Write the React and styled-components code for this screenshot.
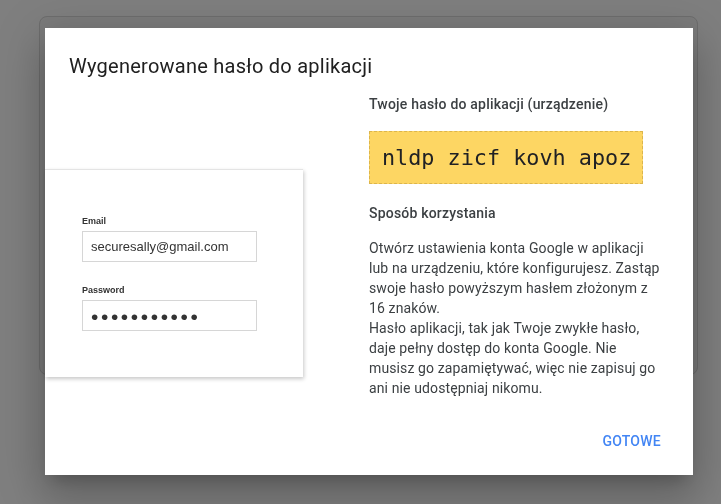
import React from "react";
import styled, { createGlobalStyle } from "styled-components";

const GlobalStyle = createGlobalStyle`
	html, body {
		margin: 0;
		padding: 0;
		background: #7f7f7f;
		font-family: Roboto, "Liberation Sans", Arial, sans-serif;
		overflow: hidden;
	}
`;

const Page = styled.div`
	width: 721px;
	height: 504px;
	padding: 16px 0 0 39px;
	box-sizing: border-box;
`;

// the dimmed page content sitting under the modal
const UnderPanel = styled.div`
	width: 659px;
	height: 359px;
	box-sizing: border-box;
	border: 1px solid #6d6d6d;
	border-radius: 8px;
	background: #7b7b7b;
`;

const Dialog = styled.div`
	position: fixed;
	left: 45px;
	top: 28px;
	width: 648px;
	height: 447px;
	background: #fff;
	display: flex;
	flex-direction: column;
	box-shadow: 0 11px 15px -7px rgba(0, 0, 0, 0.2),
		0 24px 38px 3px rgba(0, 0, 0, 0.14), 0 9px 46px 8px rgba(0, 0, 0, 0.12);
`;

const Title = styled.h2`
	margin: 0;
	padding: 24px 24px 0;
	font-size: 20px;
	line-height: 28px;
	font-weight: 400;
	letter-spacing: 0.25px;
	color: #202020;
`;

const Body = styled.div`
	display: flex;
	margin-top: 14px;
`;

const IllustrationCol = styled.div`
	width: 324px;
	flex-shrink: 0;
	padding-top: 75px;
`;

const LoginCard = styled.div`
	width: 258px;
	height: 208px;
	box-sizing: border-box;
	background: #fff;
	border-top: 1px solid #e4e4e4;
	box-shadow: 1px 2px 4px rgba(0, 0, 0, 0.22);
	padding: 45px 0 0 37px;
	font-family: "Liberation Sans", Arial, sans-serif;
`;

const FieldLabel = styled.div`
	font-size: 9px;
	line-height: 12px;
	font-weight: 700;
	color: #333;
	margin-bottom: 4px;
	margin-top: ${(p) => (p.$first ? "0" : "22px")};
`;

const FakeInput = styled.div`
	width: 175px;
	height: 31px;
	box-sizing: border-box;
	border: 1px solid #d6d6d6;
	display: flex;
	align-items: center;
	padding-left: 8px;
	font-size: 13px;
	color: #333;
`;

const Dots = styled.span`
	font-size: 21px;
	letter-spacing: 2.6px;
	color: #333;
	line-height: 1;
	margin-top: 1px;
`;

const InfoCol = styled.div`
	width: 300px;
	flex-shrink: 0;
	color: #3c4043;
`;

const Heading = styled.div`
	font-size: 14px;
	line-height: 20px;
	font-weight: 500;
	letter-spacing: 0.2px;
	color: #3c4043;
	margin-top: ${(p) => p.$mt || "0"};
`;

const PasswordBox = styled.div`
	margin-top: 17px;
	width: 274px;
	height: 53px;
	box-sizing: border-box;
	background: #fdd663;
	border: 1px dashed #dcb54c;
	display: flex;
	align-items: center;
	padding-left: 12px;
	font-family: "DejaVu Sans Mono", "Liberation Mono", monospace;
	font-size: 21.8px;
	color: #202124;
	white-space: nowrap;
`;

const Paragraph = styled.p`
	margin: 15px 0 0;
	width: 295px;
	font-size: 14px;
	line-height: 20px;
	letter-spacing: 0.12px;
	color: #3c4043;
`;

const Footer = styled.div`
	margin-top: auto;
	display: flex;
	justify-content: flex-end;
	padding: 0 24px 16px;
`;

const TextButton = styled.button`
	height: 36px;
	padding: 0 8px;
	border: none;
	background: transparent;
	font-family: Roboto, "Liberation Sans", Arial, sans-serif;
	font-size: 14px;
	font-weight: 500;
	letter-spacing: 0.25px;
	color: #4285f4;
	cursor: pointer;
`;

export default function App() {
	return (
		<Page>
			<GlobalStyle />
			<UnderPanel />
			<Dialog>
				<Title>Wygenerowane hasło do aplikacji</Title>
				<Body>
					<IllustrationCol>
						<LoginCard>
							<FieldLabel $first>Email</FieldLabel>
							<FakeInput>securesally@gmail.com</FakeInput>
							<FieldLabel>Password</FieldLabel>
							<FakeInput>
								<Dots>•••••••••••</Dots>
							</FakeInput>
						</LoginCard>
					</IllustrationCol>
					<InfoCol>
						<Heading>Twoje hasło do aplikacji (urządzenie)</Heading>
						<PasswordBox>nldp zicf kovh apoz</PasswordBox>
						<Heading $mt="19px">Sposób korzystania</Heading>
						<Paragraph>
							Otwórz ustawienia konta Google w aplikacji lub na urządzeniu,
							które konfigurujesz. Zastąp swoje hasło powyższym hasłem
							złożonym z 16 znaków.
							<br />
							Hasło aplikacji, tak jak Twoje zwykłe hasło, daje pełny dostęp
							do konta Google. Nie musisz go zapamiętywać, więc nie zapisuj go
							ani nie udostępniaj nikomu.
						</Paragraph>
					</InfoCol>
				</Body>
				<Footer>
					<TextButton>GOTOWE</TextButton>
				</Footer>
			</Dialog>
		</Page>
	);
}
